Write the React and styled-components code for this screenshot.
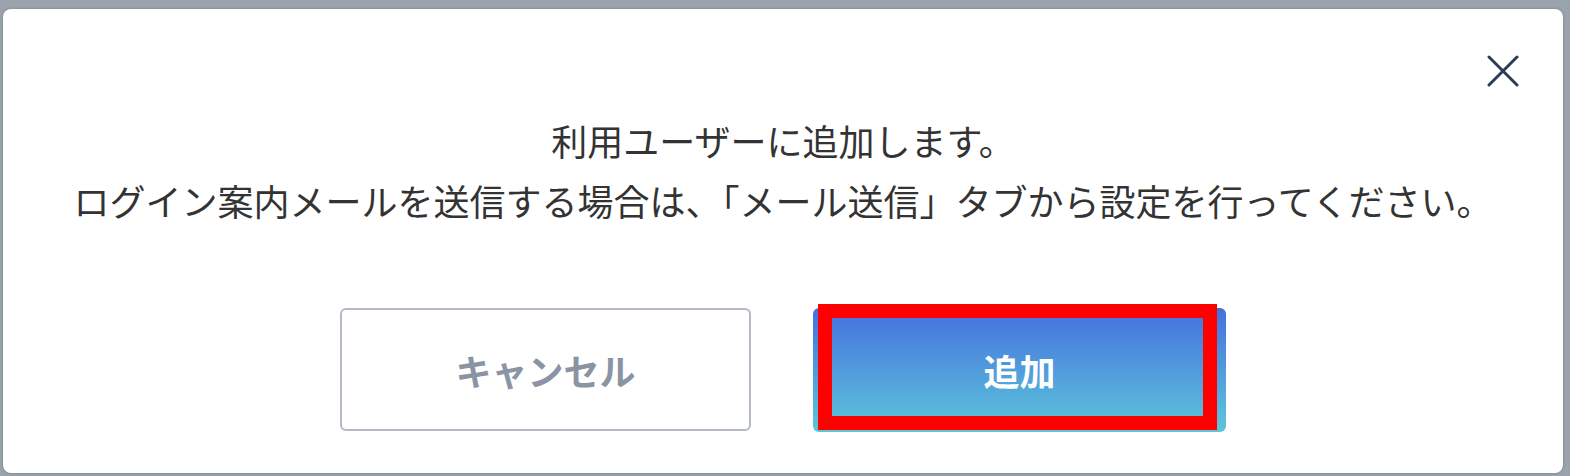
import styled, { createGlobalStyle } from 'styled-components'

const GlobalStyle = createGlobalStyle`
  html, body {
    margin: 0;
    padding: 0;
    background: #9ba4ac;
  }
  body {
    font-family: "Noto Sans CJK JP", "Noto Sans", sans-serif;
  }
`

const Overlay = styled.div`
  width: 1570px;
  height: 476px;
  box-sizing: border-box;
  padding: 9px 7px 3px 3px;
`
const Modal = styled.div`
  position: relative;
  height: 464px;
  box-sizing: border-box;
  padding: 101px 0 0;
  border-radius: 8px;
  background: #fff;
  box-shadow: 0 0 3px rgba(40, 50, 60, 0.35);
  display: flex;
  flex-direction: column;
  align-items: center;
`
const Close = styled.button`
  position: absolute;
  top: 46px;
  right: 44px;
  width: 32px;
  height: 32px;
  padding: 0;
  border: none;
  background: transparent;
  cursor: pointer;
  display: flex;
  align-items: center;
  justify-content: center;
`
const Message = styled.p`
  margin: 0;
  font-size: 36px;
  line-height: 60px;
  color: #333;
  text-align: center;
`
const Actions = styled.div`
  display: flex;
  gap: 62px;
  margin-top: 78px;
`
const Button = styled.button`
  position: relative;
  width: ${({ primary }) => (primary ? '413px' : '411px')};
  height: ${({ primary }) => (primary ? '124px' : '123px')};
  box-sizing: border-box;
  border-radius: 6px;
  border: ${({ primary }) => (primary ? 'none' : '2px solid #b3bac4')};
  background: ${({ primary }) => (primary ? 'linear-gradient(180deg, #4470df 0%, #5cc7d9 100%)' : '#fff')};
  color: ${({ primary }) => (primary ? '#fff' : '#8a94a3')};
  font-family: inherit;
  font-size: 36px;
  font-weight: 700;
  cursor: pointer;
`
const Highlight = styled.span`
  position: absolute;
  top: -4px;
  left: 5px;
  right: 9px;
  bottom: 2px;
  border: 14px solid #ff0000;
  pointer-events: none;
`

const App = () => (
  <>
    <GlobalStyle />
    <Overlay>
      <Modal>
        <Close aria-label="閉じる">
          <svg width="32" height="32" viewBox="0 0 32 32">
            <path d="M2 2L30 30M30 2L2 30" stroke="#2c3d58" strokeWidth="3" strokeLinecap="round" />
          </svg>
        </Close>
        <Message>
          利用ユーザーに追加します。
          <br />
          ログイン案内メールを送信する場合は、「メール送信」タブから設定を行ってください。
        </Message>
        <Actions>
          <Button>キャンセル</Button>
          <Button primary>
            追加
            <Highlight />
          </Button>
        </Actions>
      </Modal>
    </Overlay>
  </>
)

export default App
